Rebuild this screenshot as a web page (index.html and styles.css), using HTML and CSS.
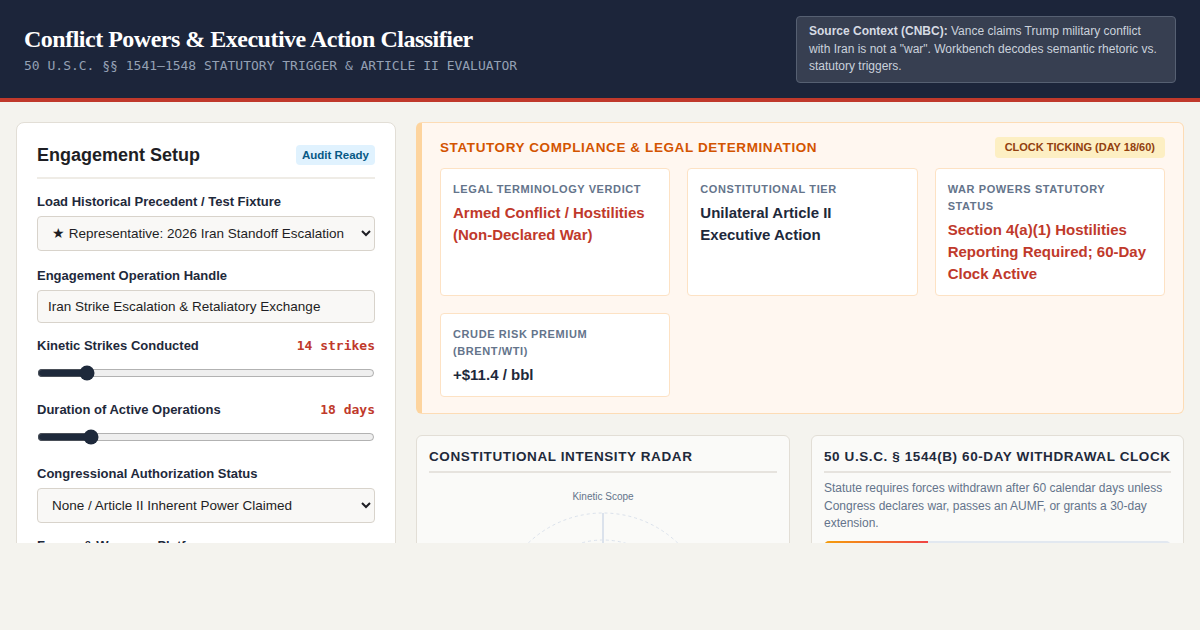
FILE: index.html
```html
<!DOCTYPE html>
<html>
<head>
    <title>Conflict Powers &amp; Executive Action Classifier</title>
    <link rel="stylesheet" href="styles.css">
</head>

<body>
    <header class="topbar">
        <div class="brand">
            <h1>Conflict Powers &amp; Executive Action Classifier</h1>
            <p class="subtitle">50 U.S.C. §§ 1541–1548 STATUTORY TRIGGER &amp; ARTICLE II EVALUATOR</p>
        </div>
        <div class="source-note">
            <strong>Source Context (CNBC):</strong> Vance claims Trump military conflict with Iran is not a "war". Workbench decodes semantic rhetoric vs. statutory triggers.
        </div>
    </header>

    <main class="workspace">
        <section class="setup-panel">
            <div class="panel-head">
                <h2>Engagement Setup</h2>
                <span class="audit-badge">Audit Ready</span>
            </div>

            <div class="field">
                <label for="fixture">Load Historical Precedent / Test Fixture</label>
                <select id="fixture" class="control">
                    <option>★ Representative: 2026 Iran Standoff Escalation</option>
                    <option>Libya 2011 Air Campaign</option>
                    <option>Kosovo 1999 Air War</option>
                </select>
            </div>

            <div class="field field-tight">
                <label for="handle">Engagement Operation Handle</label>
                <input id="handle" class="control" type="text" value="Iran Strike Escalation &amp; Retaliatory Exchange">
            </div>

            <div class="field field-range">
                <div class="range-head">
                    <label for="strikes">Kinetic Strikes Conducted</label>
                    <span class="range-value">14 strikes</span>
                </div>
                <input id="strikes" class="slider" type="range" min="1" max="100" value="14">
            </div>

            <div class="field field-range">
                <div class="range-head">
                    <label for="duration">Duration of Active Operations</label>
                    <span class="range-value">18 days</span>
                </div>
                <input id="duration" class="slider" type="range" min="1" max="120" value="18">
            </div>

            <div class="field field-tight">
                <label for="auth">Congressional Authorization Status</label>
                <select id="auth" class="control">
                    <option>None / Article II Inherent Power Claimed</option>
                    <option>AUMF Enacted</option>
                    <option>Formal Declaration of War</option>
                </select>
            </div>

            <div class="field">
                <label for="forces">Forces &amp; Weapons Platforms</label>
                <select id="forces" class="control">
                    <option>Naval Strike Group + Air Assets</option>
                </select>
            </div>
        </section>

        <section class="results">
            <div class="determination">
                <div class="determination-head">
                    <h3>Statutory Compliance &amp; Legal Determination</h3>
                    <span class="clock-badge">CLOCK TICKING (DAY 18/60)</span>
                </div>
                <div class="verdict-grid">
                    <div class="verdict-card">
                        <div class="verdict-label">Legal Terminology Verdict</div>
                        <div class="verdict-value alert">Armed Conflict / Hostilities (Non-Declared War)</div>
                    </div>
                    <div class="verdict-card">
                        <div class="verdict-label">Constitutional Tier</div>
                        <div class="verdict-value">Unilateral Article II Executive Action</div>
                    </div>
                    <div class="verdict-card">
                        <div class="verdict-label">War Powers Statutory Status</div>
                        <div class="verdict-value alert">Section 4(a)(1) Hostilities Reporting Required; 60-Day Clock Active</div>
                    </div>
                    <div class="verdict-card">
                        <div class="verdict-label">Crude Risk Premium (Brent/WTI)</div>
                        <div class="verdict-value">+$11.4 / bbl</div>
                    </div>
                </div>
            </div>

            <div class="chart-row">
                <div class="chart-card">
                    <h4>Constitutional Intensity Radar</h4>
                    <svg class="radar" viewBox="0 0 348 260" width="348" height="260">
                        <text x="174" y="20" text-anchor="middle" class="radar-axis-label">Kinetic Scope</text>
                        <g fill="none" stroke="#dbe2ec" stroke-dasharray="3 3">
                            <circle cx="174" cy="141" r="108"/>
                            <circle cx="174" cy="141" r="81"/>
                            <circle cx="174" cy="141" r="54"/>
                            <circle cx="174" cy="141" r="27"/>
                        </g>
                        <line x1="174" y1="141" x2="174" y2="33" stroke="#dbe2ec" stroke-width="2"/>
                        <line x1="174" y1="141" x2="277" y2="108" stroke="#dbe2ec" stroke-width="2"/>
                        <line x1="174" y1="141" x2="71" y2="108" stroke="#dbe2ec" stroke-width="2"/>
                        <polygon points="174,70 240,120 210,200 138,200 110,120" fill="rgba(192,57,43,0.15)" stroke="#c0392b" stroke-width="2"/>
                    </svg>
                </div>

                <div class="chart-card">
                    <h4>50 U.S.C. § 1544(b) 60-Day Withdrawal Clock</h4>
                    <p class="clock-note">Statute requires forces withdrawn after 60 calendar days unless Congress declares war, passes an AUMF, or grants a 30-day extension.</p>
                    <div class="clock-track">
                        <div class="clock-fill" style="width: 30%"></div>
                    </div>
                </div>
            </div>
        </section>
    </main>
</body>
</html>
```

FILE: styles.css
```css
* {
    box-sizing: border-box;
    margin: 0;
    padding: 0;
}

body {
    background: #f4f3ee;
    font-family: "Liberation Sans", Arial, sans-serif;
    color: #1e293b;
}

/* header */
.topbar {
    background: #1c253a;
    border-bottom: 4px solid #c0392b;
    padding: 16px 24px;
    height: 102px;
    display: flex;
    justify-content: space-between;
    align-items: flex-start;
}
.brand h1 {
    font-family: "Liberation Serif", "Times New Roman", serif;
    font-size: 24px;
    font-weight: bold;
    letter-spacing: -0.5px;
    color: #ffffff;
    margin-top: 8px;
    line-height: 30px;
}
.subtitle {
    font-family: "DejaVu Sans Mono", monospace;
    font-size: 13px;
    color: #94a0b4;
    margin-top: 4px;
}
.source-note {
    width: 380px;
    background: #373f51;
    border: 1px solid #566072;
    border-radius: 4px;
    padding: 6px 12px;
    font-size: 12px;
    line-height: 17.5px;
    color: #cbd2dc;
}
.source-note strong {
    color: #d6dbe3;
}

/* main area */
.workspace {
    height: 441px;
    overflow: hidden;
    padding: 20px 16px 0;
    display: grid;
    grid-template-columns: 380px 1fr;
    gap: 20px;
    align-items: start;
}

.setup-panel {
    background: #ffffff;
    border: 1px solid #e2ded6;
    border-radius: 8px;
    padding: 20px 20px 20px;
}
.panel-head {
    display: flex;
    justify-content: space-between;
    align-items: center;
    padding-bottom: 10px;
    border-bottom: 2px solid #efece6;
    margin-bottom: 15px;
}
.panel-head h2 {
    font-size: 18px;
    line-height: 24px;
    color: #1e1e24;
}
.audit-badge {
    background: #e0f2fe;
    color: #075985;
    font-size: 11.5px;
    font-weight: bold;
    padding: 4px 6px;
    border-radius: 4px;
}

.field {
    margin-bottom: 17px;
}
.field-tight {
    margin-bottom: 15px;
}
.field-range {
    margin-bottom: 21px;
}
.field label {
    display: block;
    font-size: 13px;
    font-weight: bold;
    line-height: 16px;
    color: #1e293b;
    margin-bottom: 6px;
}
.control {
    display: block;
    width: 100%;
    height: 35px;
    background: #f9f8f6;
    border: 1px solid #d8d3cb;
    border-radius: 4px;
    padding: 0 10px;
    font-family: "Liberation Sans", Arial, sans-serif;
    font-size: 13.5px;
    color: #1e1e24;
}
input.control {
    height: 33px;
}
.range-head {
    display: flex;
    justify-content: space-between;
}
.range-head label {
    margin-bottom: 0;
}
.range-value {
    font-family: "DejaVu Sans Mono", monospace;
    font-size: 13px;
    font-weight: bold;
    line-height: 16px;
    color: #c0392b;
}
.slider {
    display: block;
    width: 100%;
    margin-top: 11px;
    height: 16px;
    accent-color: #1e293b;
}

/* determination panel */
.results {
    display: flex;
    flex-direction: column;
    gap: 21px;
}
.determination {
    background: #fff7f0;
    border: 1px solid #fddcb5;
    border-left: 6px solid #fdd49e;
    border-radius: 6px;
    padding: 14px 18px 16px 18px;
}
.determination-head {
    display: flex;
    justify-content: space-between;
    align-items: center;
    margin-bottom: 10px;
}
.determination-head h3 {
    font-size: 13.5px;
    text-transform: uppercase;
    letter-spacing: 0.6px;
    color: #d35400;
}
.clock-badge {
    background: #fdefc3;
    color: #92400e;
    font-size: 11px;
    font-weight: bold;
    padding: 4px 10px 5px;
    border-radius: 4px;
}
.verdict-grid {
    display: grid;
    grid-template-columns: repeat(3, 1fr);
    gap: 17px;
}
.verdict-card {
    background: #ffffff;
    border: 1px solid #fde2c4;
    border-radius: 4px;
    padding: 12px 12px 10px;
}
.verdict-label {
    font-size: 11px;
    font-weight: bold;
    text-transform: uppercase;
    letter-spacing: 0.6px;
    line-height: 17px;
    color: #64748b;
    margin-bottom: 4px;
}
.verdict-value {
    font-size: 15px;
    font-weight: bold;
    line-height: 22px;
    color: #1e293b;
}
.verdict-value.alert {
    color: #c0392b;
}

/* bottom charts */
.chart-row {
    display: grid;
    grid-template-columns: 1fr 1fr;
    gap: 21px;
}
.chart-card {
    background: #fafaf8;
    border: 1px solid #e2ded6;
    border-radius: 6px;
    padding: 13px 12px 20px;
    height: 300px;
}
.chart-card h4 {
    font-size: 13.5px;
    line-height: 16px;
    text-transform: uppercase;
    letter-spacing: 0.6px;
    color: #1e293b;
    padding-bottom: 6px;
    border-bottom: 2px solid #e6e3de;
}
.radar {
    display: block;
    margin: 7px auto 0;
}
.radar-axis-label {
    font-family: "Liberation Sans", Arial, sans-serif;
    font-size: 10px;
    fill: #64748b;
}
.clock-note {
    margin-top: 7px;
    font-size: 12px;
    line-height: 17.5px;
    color: #64748b;
}
.clock-track {
    margin-top: 8px;
    height: 10px;
    background: #e2e8f0;
    border-radius: 5px;
    overflow: hidden;
}
.clock-fill {
    height: 100%;
    background: linear-gradient(90deg, #f59e0b, #ef4444);
}
```
